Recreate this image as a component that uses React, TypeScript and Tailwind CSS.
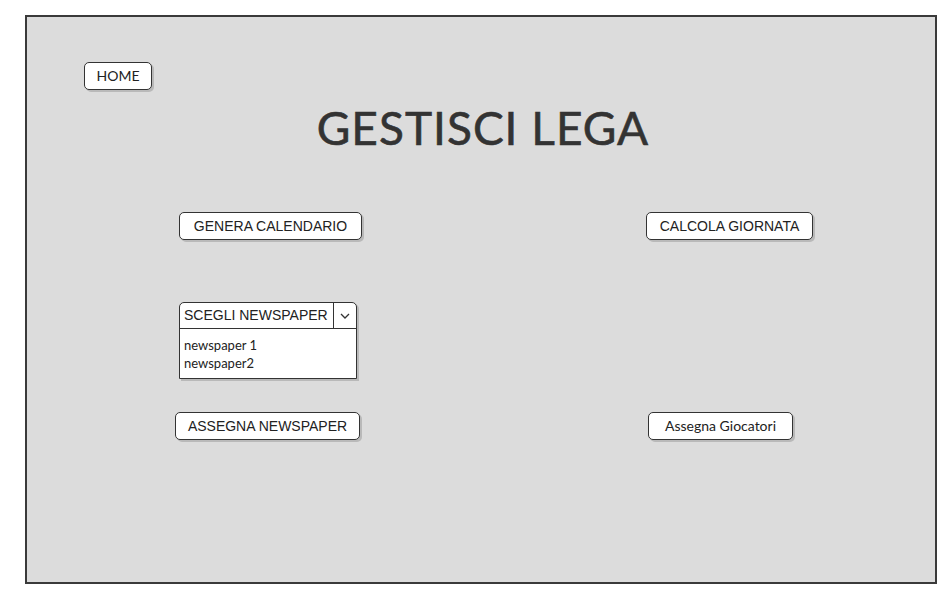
import React from "react";

const btn =
  "h-[28px] flex items-center justify-center bg-white border-[1.5px] border-[#333] rounded-[5px] shadow-[2px_2px_0_#b9b9b9] text-[#222] text-[14px] leading-none";

export default function App() {
  return (
    <div className="w-[952px] h-[595px] bg-white pt-[15px] pl-[25px]" style={{ fontFamily: "'Liberation Sans', Arial, sans-serif" }}>
      <div className="w-[912px] h-[569px] bg-[#dcdcdc] border-2 border-[#3a3a3a] flex flex-col">
        <div className="pl-[57px] pt-[45px]">
          <div className={`${btn} w-[68px] text-[14px]`} style={{ fontFamily: "Lato, 'Noto Sans', sans-serif" }}>HOME</div>
        </div>
        <div className="flex justify-center mt-[12px] pl-[4px]">
          <h1 className="text-[46px] leading-[52px] text-[#333] tracking-[1px] [-webkit-text-stroke:0.6px_#333]" style={{ fontFamily: "Lato, 'Noto Sans', sans-serif" }}>GESTISCI LEGA</h1>
        </div>
        <div className="flex mt-[58px]">
          <div className="flex flex-col w-[560px] pl-[152px]">
            <div className={`${btn} w-[183px]`}>GENERA CALENDARIO</div>
            <div className="mt-[62px] w-[178px] bg-white border-[1.5px] border-[#333] rounded-t-[5px] shadow-[2px_2px_0_#b9b9b9]">
              <div className="h-[26px] flex border-b-[1.5px] border-[#333]">
                <div className="flex-1 flex items-center pl-[4px] text-[14px] text-[#222] border-r-[1.5px] border-[#333]">SCEGLI NEWSPAPER</div>
                <div className="w-[22px] flex items-center justify-center">
                  <svg width="10" height="6" viewBox="0 0 10 6" fill="none" stroke="#333" strokeWidth="1.3"><path d="M1 1l4 4 4-4" /></svg>
                </div>
              </div>
              <div className="pl-[4px] pt-[7px] pb-[6px] text-[13px] leading-[18px] text-[#222]" style={{ fontFamily: "Lato, 'Noto Sans', sans-serif" }}>
                <div>newspaper 1</div>
                <div>newspaper2</div>
              </div>
            </div>
            <div className={`${btn} w-[185px] -ml-[4px] mt-[33px]`}>ASSEGNA NEWSPAPER</div>
          </div>
          <div className="flex flex-col pl-[59px]">
            <div className={`${btn} w-[167px]`}>CALCOLA GIORNATA</div>
            <div className={`${btn} w-[145px] ml-[2px] mt-[172px]`} style={{ fontFamily: "Lato, 'Noto Sans', sans-serif" }}>Assegna Giocatori</div>
          </div>
        </div>
      </div>
    </div>
  );
}
